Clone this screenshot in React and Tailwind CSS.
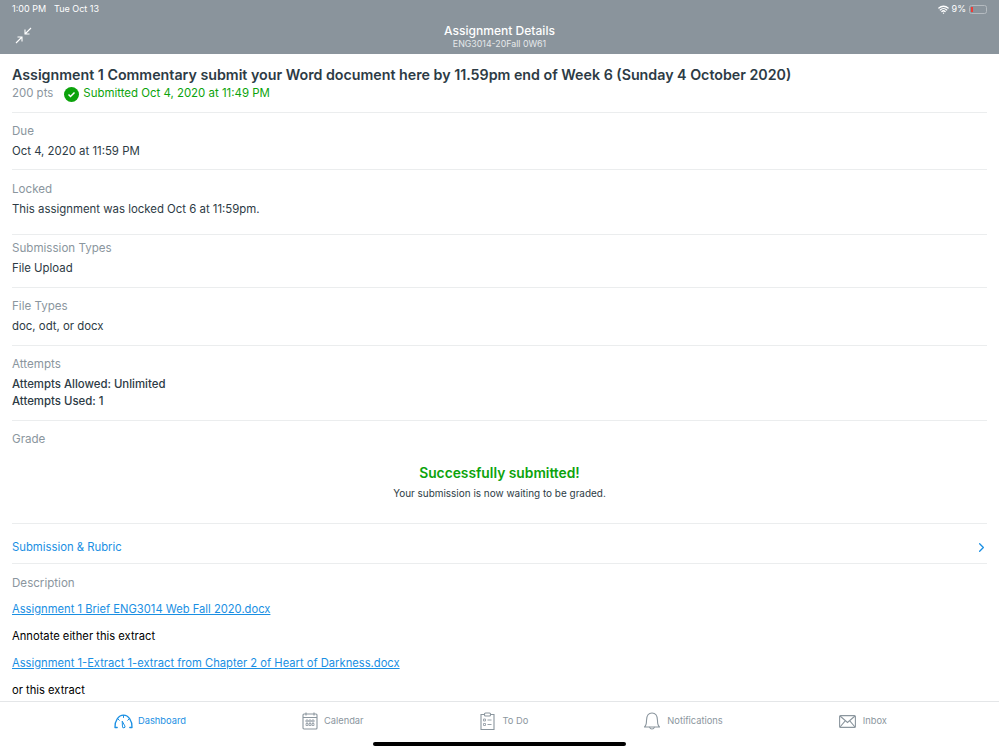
import { useState } from "react";
import { ChevronRight, Wifi } from "lucide-react";

function InfoRow({ label, children, className }) {
  return (
    <div className={`border-b border-[#ebedee] ${className}`}>
      <p className="text-[11.6px] leading-[18px] text-[#8b969e]">{label}</p>
      <div className="text-[11.4px] leading-[18px] text-[#2d3b45]">{children}</div>
    </div>
  );
}

function DashboardIcon() {
  return (
    <svg width="19" height="15" viewBox="0 0 19 15" fill="none" stroke="#1a8fe3" strokeWidth="1.3" strokeLinecap="round">
      <path d="M1 13.5h2.2M18 13.5h-2.2M1 13.5C.6 7 4.5 1.2 9.5 1.2S18.4 7 18 13.5" />
      <path d="M9.5 1.5v2M4 5l1.3 1.3M15 5l-1.3 1.3" strokeWidth="1" />
      <path d="M8.4 7.5l2.4 4.4a1.3 1.3 0 1 1-2.4.6z" strokeWidth="1" />
    </svg>
  );
}

function CalendarIcon() {
  return (
    <svg width="16" height="18" viewBox="0 0 16 18" fill="none" stroke="#8b969e" strokeWidth="1.1">
      <rect x="1" y="2" width="14" height="15" rx="1" />
      <path d="M1 5.5h14M4 .5v3M12 .5v3" />
      <path d="M4 8h2v2H4zM7 8h2v2H7zM10 8h2v2h-2zM4 11.5h2v2H4zM7 11.5h2v2H7zM10 11.5h2v2h-2z" strokeWidth=".8" />
    </svg>
  );
}

function TodoIcon() {
  return (
    <svg width="15" height="18" viewBox="0 0 15 18" fill="none" stroke="#8b969e" strokeWidth="1.1">
      <path d="M4.5 2.5H1v15h13v-15h-3.5" />
      <rect x="4.5" y="1" width="6" height="3" rx="1" />
      <path d="M3.5 7h2v2h-2zM3.5 11.5h2v2h-2z" strokeWidth=".8" />
      <path d="M7.5 8h4M7.5 12.5h4" strokeWidth=".9" />
    </svg>
  );
}

function BellIcon() {
  return (
    <svg width="16" height="18" viewBox="0 0 16 18" fill="none" stroke="#8b969e" strokeWidth="1.1" strokeLinecap="round">
      <path d="M.5 15h15c-1.6-1.4-2-3-2-6.5C13.5 3.5 11.3 1 8 1S2.5 3.5 2.5 8.5C2.5 12 2.1 13.6.5 15z" />
      <path d="M5.7 15.3a2.4 2.4 0 0 0 4.6 0" />
    </svg>
  );
}

function MailIcon() {
  return (
    <svg width="17" height="13" viewBox="0 0 17 13" fill="none" stroke="#8b969e" strokeWidth="1.1">
      <rect x=".6" y=".6" width="15.8" height="11.8" rx="1" />
      <path d="M1 1l7.5 6.5L16 1M1 12l5-5.8M16 12l-5-5.8" />
    </svg>
  );
}

function TabItem({ icon, label, active, className }) {
  return (
    <div className={`flex items-center ${className}`}>
      {icon}
      <span className={`text-[9.3px] ${active ? "text-[#1a8fe3]" : "text-[#8b969e]"}`}>{label}</span>
    </div>
  );
}

export default function App() {
  const [tab] = useState("Dashboard");

  return (
    <div className="relative flex h-[749px] w-[999px] flex-col overflow-hidden bg-white font-['Inter',sans-serif]">
      {/* Header */}
      <div className="relative h-[54px] shrink-0 bg-[#8a949c] text-white">
        <div className="flex h-[18px] items-center justify-between pl-3 pr-[12px] text-[9px]">
          <div className="flex gap-[8px]">
            <span>1:00 PM</span>
            <span>Tue Oct 13</span>
          </div>
          <div className="flex items-center gap-[3px]">
            <Wifi size={11} strokeWidth={3} />
            <span>9%</span>
            <div className="flex h-[9px] w-[18px] items-center rounded-[2.5px] border border-[#b5bbc0] p-[1px]">
              <div className="h-full w-[2px] bg-[#ef3b36]" />
            </div>
          </div>
        </div>
        <svg className="absolute left-[15px] top-[27px]" width="17" height="17" viewBox="0 0 17 17" fill="none" stroke="white" strokeWidth="1.1">
          <path d="M16 1l-6 6M10 2.5V7h4.5M1 16l6-6M2.5 10H7v4.5" />
        </svg>
        <div className="absolute inset-x-0 top-[23px] text-center">
          <p className="text-[12.05px] font-medium leading-[15px]">Assignment Details</p>
          <p className="text-[8.8px] leading-[11px] text-[#e6e9eb]">ENG3014-20Fall 0W61</p>
        </div>
      </div>

      {/* Scrolling content */}
      <div className="min-h-0 flex-1 overflow-hidden px-3">
        <div className="h-[59px] border-b border-[#ebedee] pt-[12px]">
          <h1 className="text-[14.24px] font-semibold leading-[18px] text-[#2d3b45]">
            Assignment 1 Commentary submit your Word document here by 11.59pm end of Week 6 (Sunday 4 October 2020)
          </h1>
          <div className="mt-[1px] flex h-[18px] items-center text-[11.45px]">
            <span className="text-[#8b969e]">200 pts</span>
            <span className="ml-[11px] flex h-[15px] w-[15px] items-center justify-center rounded-full bg-[#0ca30c]">
              <svg width="9" height="9" viewBox="0 0 9 9" fill="none" stroke="white" strokeWidth="1.5">
                <path d="M1.5 4.5l2 2 4-4" />
              </svg>
            </span>
            <span className="ml-[4px] text-[#0ca30c]">Submitted Oct 4, 2020 at 11:49 PM</span>
          </div>
        </div>

        <InfoRow label="Due" className="h-[57px] pt-[9px]">
          <p className="mt-[2px]">Oct 4, 2020 at 11:59 PM</p>
        </InfoRow>
        <InfoRow label="Locked" className="h-[65px] pt-[10px]">
          <p className="mt-[2px]">This assignment was locked Oct 6 at 11:59pm.</p>
        </InfoRow>
        <InfoRow label="Submission Types" className="h-[53px] pt-[4px]">
          <p className="mt-[2px]">File Upload</p>
        </InfoRow>
        <InfoRow label="File Types" className="h-[58px] pt-[9px]">
          <p className="mt-[2px]">doc, odt, or docx</p>
        </InfoRow>
        <InfoRow label="Attempts" className="h-[75px] pt-[9px]">
          <div className="mt-[3px] font-medium leading-[17px]">
            <p>Attempts Allowed: Unlimited</p>
            <p>Attempts Used: 1</p>
          </div>
        </InfoRow>

        {/* Grade */}
        <div className="h-[103px] border-b border-[#ebedee] pt-[9px]">
          <p className="text-[11.6px] leading-[18px] text-[#8b969e]">Grade</p>
          <p className="mt-[16px] text-center text-[13.8px] font-semibold leading-[18px] text-[#0ca30c]">Successfully submitted!</p>
          <p className="mt-[4px] text-center text-[9.95px] leading-[14px] text-[#2d3b45]">Your submission is now waiting to be graded.</p>
        </div>

        <div className="flex h-[40px] items-center justify-between border-b border-[#ebedee] pt-[7px] text-[11.3px] text-[#1a8fe3]">
          <span>Submission &amp; Rubric</span>
          <ChevronRight size={15} strokeWidth={2} className="-mr-[2px]" />
        </div>

        {/* Description */}
        <div className="pt-[10px] text-[11.2px] leading-[18px]">
          <p className="text-[11.6px] text-[#8b969e]">Description</p>
          <a className="mt-[8px] block text-[#1a8fe3] underline">Assignment 1 Brief ENG3014 Web Fall 2020.docx</a>
          <p className="mt-[9px] text-black">Annotate either this extract</p>
          <a className="mt-[9px] block text-[#1a8fe3] underline">Assignment 1-Extract 1-extract from Chapter 2 of Heart of Darkness.docx</a>
          <p className="mt-[9px] text-black">or this extract</p>
        </div>
      </div>

      {/* Tab bar */}
      <div className="relative h-[48px] shrink-0 border-t border-[#e4e6e8] bg-white">
        <div className="flex h-[38px] items-center">
          <TabItem icon={<DashboardIcon />} label="Dashboard" active={tab === "Dashboard"} className="ml-[114px] gap-[5px]" />
          <TabItem icon={<CalendarIcon />} label="Calendar" className="ml-[116px] gap-[6px]" />
          <TabItem icon={<TodoIcon />} label="To Do" className="ml-[116px] gap-[8px]" />
          <TabItem icon={<BellIcon />} label="Notifications" className="ml-[116px] gap-[7px]" />
          <TabItem icon={<MailIcon />} label="Inbox" className="ml-[116px] gap-[7px]" />
        </div>
        <div className="absolute bottom-[3px] left-[373px] h-[4px] w-[253px] rounded-full bg-black" />
      </div>
    </div>
  );
}
